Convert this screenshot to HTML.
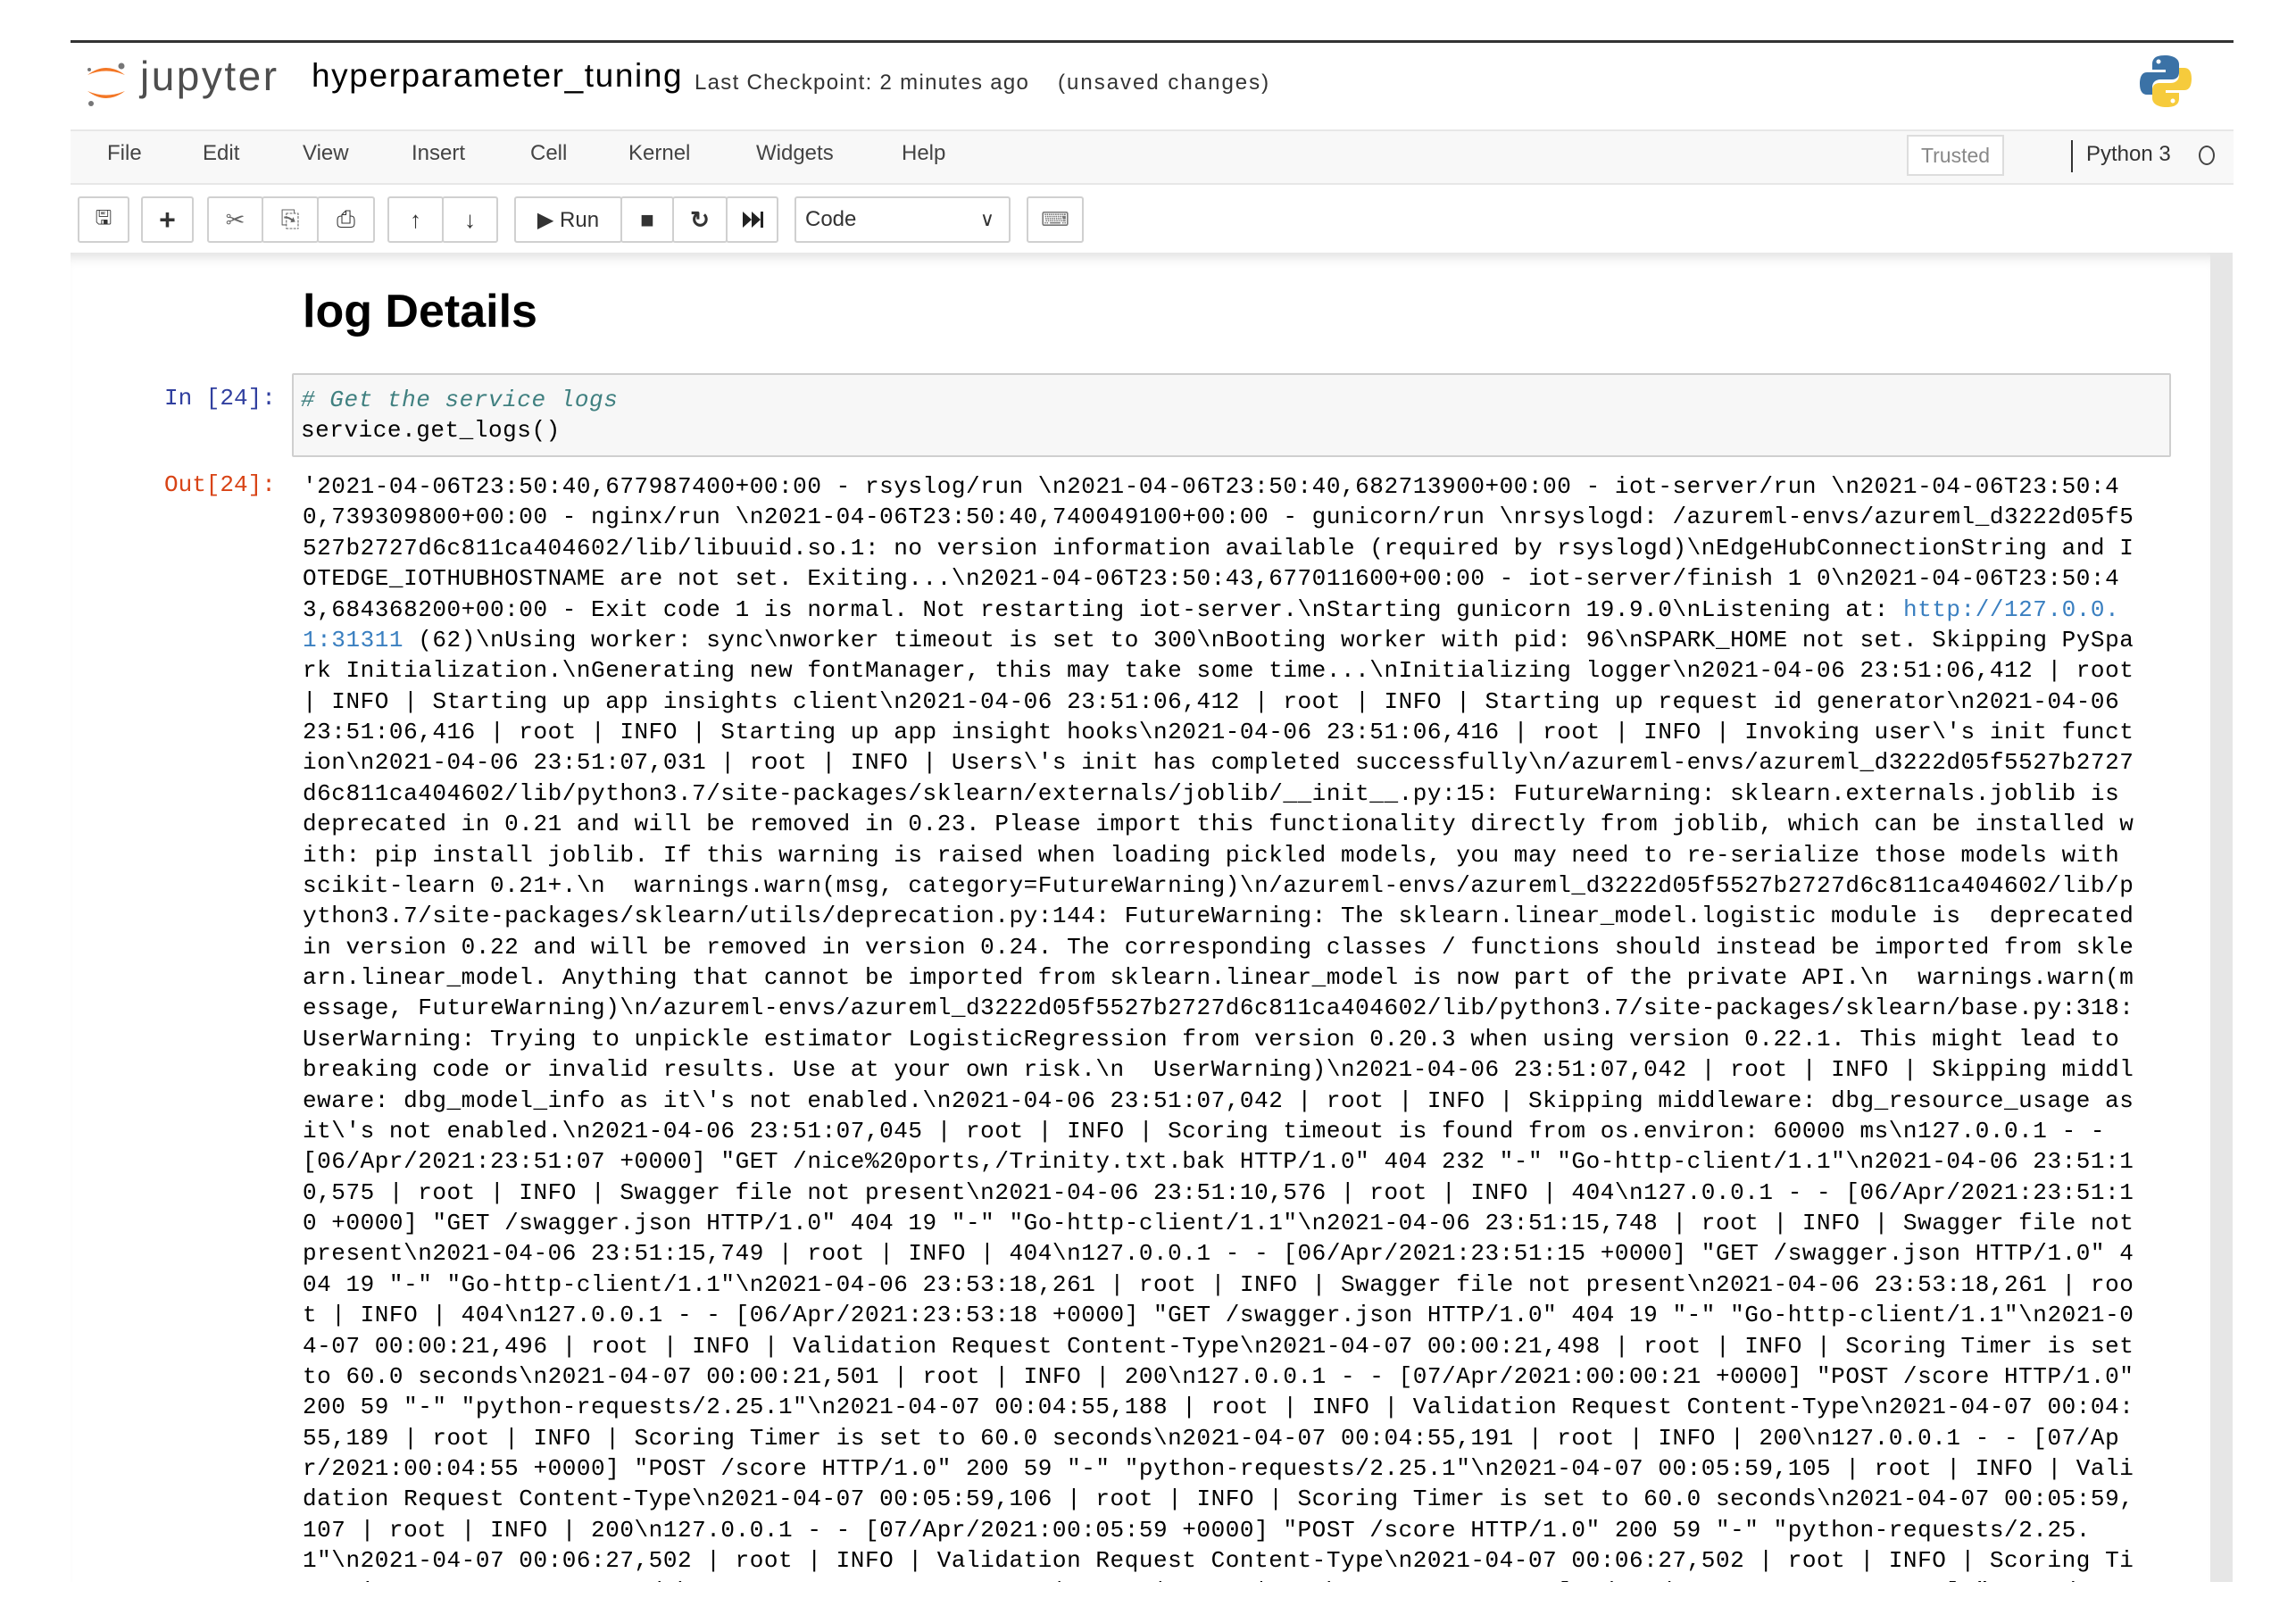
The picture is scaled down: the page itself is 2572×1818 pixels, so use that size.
<!DOCTYPE html>
<html><head><meta charset="utf-8"><style>
*{margin:0;padding:0;box-sizing:border-box}
body{width:2572px;height:1818px;background:#fff;position:relative;overflow:hidden;font-family:"Liberation Sans",sans-serif;color:#000}
.abs{position:absolute}
.topline{left:79px;top:45px;width:2423px;height:3px;background:#333}
.menubar{left:79px;top:145px;width:2423px;height:62px;background:#f8f8f8;border-top:2px solid #e7e7e7;border-bottom:2px solid #e7e7e7}
.mi{position:absolute;top:158px;font-size:24px;color:#444}
.btn{position:absolute;top:220px;height:52px;border:2px solid #d0d0d0;border-radius:3px;background:#fff;display:flex;align-items:center;justify-content:center;font-size:26px;color:#333}
.nb{left:79px;top:283px;width:2397px;height:1489px;overflow:hidden;background:#fff;box-shadow:inset 0 14px 14px -10px #ddd}
.sb{left:2476px;top:283px;width:25px;height:1489px;background:#e6e6e6}
pre{font-family:"Liberation Mono",monospace;font-size:26px;letter-spacing:0.55px;line-height:34.37px;white-space:pre}
.prompt{font-family:"Liberation Mono",monospace;font-size:26px;position:absolute}
</style></head><body>
<div class="abs topline"></div>
<svg class="abs" style="left:92px;top:60px" width="56" height="64" viewBox="0 0 56 64">
<path d="M6 24 Q27 8 48 24 Q27 15 6 24Z" fill="#f37726"/>
<path d="M6 42 Q27 58 48 42 Q27 51 6 42Z" fill="#f37726"/>
<circle cx="44" cy="14" r="3.5" fill="#767677"/><circle cx="8" cy="18" r="2" fill="#767677"/><circle cx="10" cy="56" r="3" fill="#767677"/>
</svg>
<div class="abs" style="left:157px;top:58px;font-size:46px;color:#4e4e4e;letter-spacing:2.5px">jupyter</div>
<div class="abs" style="left:349px;top:64px;font-size:37px;color:#000;letter-spacing:1.6px">hyperparameter_tuning</div>
<div class="abs" style="left:778px;top:79px;font-size:24px;color:#333;letter-spacing:1.3px">Last Checkpoint: 2 minutes ago</div>
<div class="abs" style="left:1185px;top:79px;font-size:24px;color:#333;letter-spacing:2px">(unsaved changes)</div>
<svg class="abs" style="left:2395px;top:60px" width="62" height="62" viewBox="0 0 62 62">
<path d="M30 2 C18 2 16 7 16 12 V18 H31 V21 H10 C4 21 2 27 2 34 C2 42 5 46 10 46 H16 V38 C16 32 20 29 26 29 H38 C43 29 46 26 46 21 V12 C46 6 40 2 30 2Z" fill="#3b72a6"/>
<path d="M32 60 C44 60 46 55 46 50 V44 H31 V41 H52 C58 41 60 35 60 28 C60 20 57 16 52 16 H46 V24 C46 30 42 33 36 33 H24 C19 33 16 36 16 41 V50 C16 56 22 60 32 60Z" fill="#f6cb3c"/>
<circle cx="23" cy="9" r="2.5" fill="#fff"/><circle cx="39" cy="53" r="2.5" fill="#fff"/>
</svg>
<div class="abs menubar"></div>
<div class="mi" style="left:120px">File</div>
<div class="mi" style="left:227px">Edit</div>
<div class="mi" style="left:339px">View</div>
<div class="mi" style="left:461px">Insert</div>
<div class="mi" style="left:594px">Cell</div>
<div class="mi" style="left:704px">Kernel</div>
<div class="mi" style="left:847px">Widgets</div>
<div class="mi" style="left:1010px">Help</div>
<div class="abs" style="left:2136px;top:151px;width:109px;height:46px;border:2px solid #ddd;background:#fff;font-size:23px;color:#888;text-align:center;line-height:42px">Trusted</div>
<div class="abs" style="left:2320px;top:157px;width:2px;height:36px;background:#333"></div>
<div class="mi" style="left:2337px;top:159px;color:#333">Python 3</div>
<div class="abs" style="left:2463px;top:163px;width:18px;height:22px;border:2.5px solid #444;border-radius:50%"></div>
<div class="btn" style="left:87px;width:58px;font-size:22px">&#x1F5AB;</div>
<div class="btn" style="left:158px;width:59px;font-weight:bold;font-size:32px">+</div>
<div class="btn" style="left:232px;width:63px;color:#666">&#x2702;</div>
<div class="btn" style="left:293px;width:64px;color:#666">&#x2398;</div>
<div class="btn" style="left:355px;width:65px">&#x2399;</div>
<div class="btn" style="left:434px;width:63px;font-weight:bold">&#x2191;</div>
<div class="btn" style="left:495px;width:63px;font-weight:bold">&#x2193;</div>
<div class="btn" style="left:576px;width:121px;font-size:24px">&#x25B6;&nbsp;Run</div>
<div class="btn" style="left:695px;width:60px">&#x25A0;</div>
<div class="btn" style="left:753px;width:62px;font-weight:bold">&#x21BB;</div>
<div class="btn" style="left:813px;width:59px"><svg width="26" height="22" viewBox="0 0 26 22"><path d="M2 2 L12 11 L2 20Z M12 2 L22 11 L12 20Z" fill="#222"/><rect x="22" y="2" width="3" height="18" fill="#222"/></svg></div>
<div class="btn" style="left:890px;width:242px;justify-content:space-between;padding:0 16px 0 10px;font-size:24px"><span>Code</span><span style="font-size:22px">&#x2228;</span></div>
<div class="btn" style="left:1150px;width:64px;font-size:22px;color:#777">&#x2328;</div>
<div class="abs nb">
<div class="abs" style="left:260px;top:36px;font-size:52px;font-weight:bold">log Details</div>
<div class="prompt" style="left:105px;top:148px;color:#303f9f">In [24]:</div>
<div class="abs" style="left:248px;top:135px;width:2105px;height:94px;background:#f7f7f7;border:2px solid #cfcfcf;border-radius:2px"></div>
<pre class="abs" style="left:258px;top:148px"><span style="color:#408080;font-style:italic"># Get the service logs</span>
service.get_logs()</pre>
<div class="prompt" style="left:105px;top:245px;color:#d84315">Out[24]:</div>
<pre class="abs" style="left:260px;top:245px">'2021-04-06T23:50:40,677987400+00:00 - rsyslog/run \n2021-04-06T23:50:40,682713900+00:00 - iot-server/run \n2021-04-06T23:50:4
0,739309800+00:00 - nginx/run \n2021-04-06T23:50:40,740049100+00:00 - gunicorn/run \nrsyslogd: /azureml-envs/azureml_d3222d05f5
527b2727d6c811ca404602/lib/libuuid.so.1: no version information available (required by rsyslogd)\nEdgeHubConnectionString and I
OTEDGE_IOTHUBHOSTNAME are not set. Exiting...\n2021-04-06T23:50:43,677011600+00:00 - iot-server/finish 1 0\n2021-04-06T23:50:4
3,684368200+00:00 - Exit code 1 is normal. Not restarting iot-server.\nStarting gunicorn 19.9.0\nListening at: <span style="color:#3a7fc0">http://127.0.0.
1:31311</span> (62)\nUsing worker: sync\nworker timeout is set to 300\nBooting worker with pid: 96\nSPARK_HOME not set. Skipping PySpa
rk Initialization.\nGenerating new fontManager, this may take some time...\nInitializing logger\n2021-04-06 23:51:06,412 | root
| INFO | Starting up app insights client\n2021-04-06 23:51:06,412 | root | INFO | Starting up request id generator\n2021-04-06
23:51:06,416 | root | INFO | Starting up app insight hooks\n2021-04-06 23:51:06,416 | root | INFO | Invoking user\'s init funct
ion\n2021-04-06 23:51:07,031 | root | INFO | Users\'s init has completed successfully\n/azureml-envs/azureml_d3222d05f5527b2727
d6c811ca404602/lib/python3.7/site-packages/sklearn/externals/joblib/__init__.py:15: FutureWarning: sklearn.externals.joblib is
deprecated in 0.21 and will be removed in 0.23. Please import this functionality directly from joblib, which can be installed w
ith: pip install joblib. If this warning is raised when loading pickled models, you may need to re-serialize those models with
scikit-learn 0.21+.\n  warnings.warn(msg, category=FutureWarning)\n/azureml-envs/azureml_d3222d05f5527b2727d6c811ca404602/lib/p
ython3.7/site-packages/sklearn/utils/deprecation.py:144: FutureWarning: The sklearn.linear_model.logistic module is  deprecated
in version 0.22 and will be removed in version 0.24. The corresponding classes / functions should instead be imported from skle
arn.linear_model. Anything that cannot be imported from sklearn.linear_model is now part of the private API.\n  warnings.warn(m
essage, FutureWarning)\n/azureml-envs/azureml_d3222d05f5527b2727d6c811ca404602/lib/python3.7/site-packages/sklearn/base.py:318:
UserWarning: Trying to unpickle estimator LogisticRegression from version 0.20.3 when using version 0.22.1. This might lead to
breaking code or invalid results. Use at your own risk.\n  UserWarning)\n2021-04-06 23:51:07,042 | root | INFO | Skipping middl
eware: dbg_model_info as it\'s not enabled.\n2021-04-06 23:51:07,042 | root | INFO | Skipping middleware: dbg_resource_usage as
it\'s not enabled.\n2021-04-06 23:51:07,045 | root | INFO | Scoring timeout is found from os.environ: 60000 ms\n127.0.0.1 - -
[06/Apr/2021:23:51:07 +0000] "GET /nice%20ports,/Trinity.txt.bak HTTP/1.0" 404 232 "-" "Go-http-client/1.1"\n2021-04-06 23:51:1
0,575 | root | INFO | Swagger file not present\n2021-04-06 23:51:10,576 | root | INFO | 404\n127.0.0.1 - - [06/Apr/2021:23:51:1
0 +0000] "GET /swagger.json HTTP/1.0" 404 19 "-" "Go-http-client/1.1"\n2021-04-06 23:51:15,748 | root | INFO | Swagger file not
present\n2021-04-06 23:51:15,749 | root | INFO | 404\n127.0.0.1 - - [06/Apr/2021:23:51:15 +0000] "GET /swagger.json HTTP/1.0" 4
04 19 "-" "Go-http-client/1.1"\n2021-04-06 23:53:18,261 | root | INFO | Swagger file not present\n2021-04-06 23:53:18,261 | roo
t | INFO | 404\n127.0.0.1 - - [06/Apr/2021:23:53:18 +0000] "GET /swagger.json HTTP/1.0" 404 19 "-" "Go-http-client/1.1"\n2021-0
4-07 00:00:21,496 | root | INFO | Validation Request Content-Type\n2021-04-07 00:00:21,498 | root | INFO | Scoring Timer is set
to 60.0 seconds\n2021-04-07 00:00:21,501 | root | INFO | 200\n127.0.0.1 - - [07/Apr/2021:00:00:21 +0000] "POST /score HTTP/1.0"
200 59 "-" "python-requests/2.25.1"\n2021-04-07 00:04:55,188 | root | INFO | Validation Request Content-Type\n2021-04-07 00:04:
55,189 | root | INFO | Scoring Timer is set to 60.0 seconds\n2021-04-07 00:04:55,191 | root | INFO | 200\n127.0.0.1 - - [07/Ap
r/2021:00:04:55 +0000] "POST /score HTTP/1.0" 200 59 "-" "python-requests/2.25.1"\n2021-04-07 00:05:59,105 | root | INFO | Vali
dation Request Content-Type\n2021-04-07 00:05:59,106 | root | INFO | Scoring Timer is set to 60.0 seconds\n2021-04-07 00:05:59,
107 | root | INFO | 200\n127.0.0.1 - - [07/Apr/2021:00:05:59 +0000] "POST /score HTTP/1.0" 200 59 "-" "python-requests/2.25.
1"\n2021-04-07 00:06:27,502 | root | INFO | Validation Request Content-Type\n2021-04-07 00:06:27,502 | root | INFO | Scoring Ti
mer is set to 60.0 seconds\n2021-04-07 00:06:27,502 | root | INFO | 200\n127.0.0.1 - - [07/Apr/2021:00:06:27 +0000] "POST /</pre>
</div>
<div class="abs sb"></div>
</body></html>
